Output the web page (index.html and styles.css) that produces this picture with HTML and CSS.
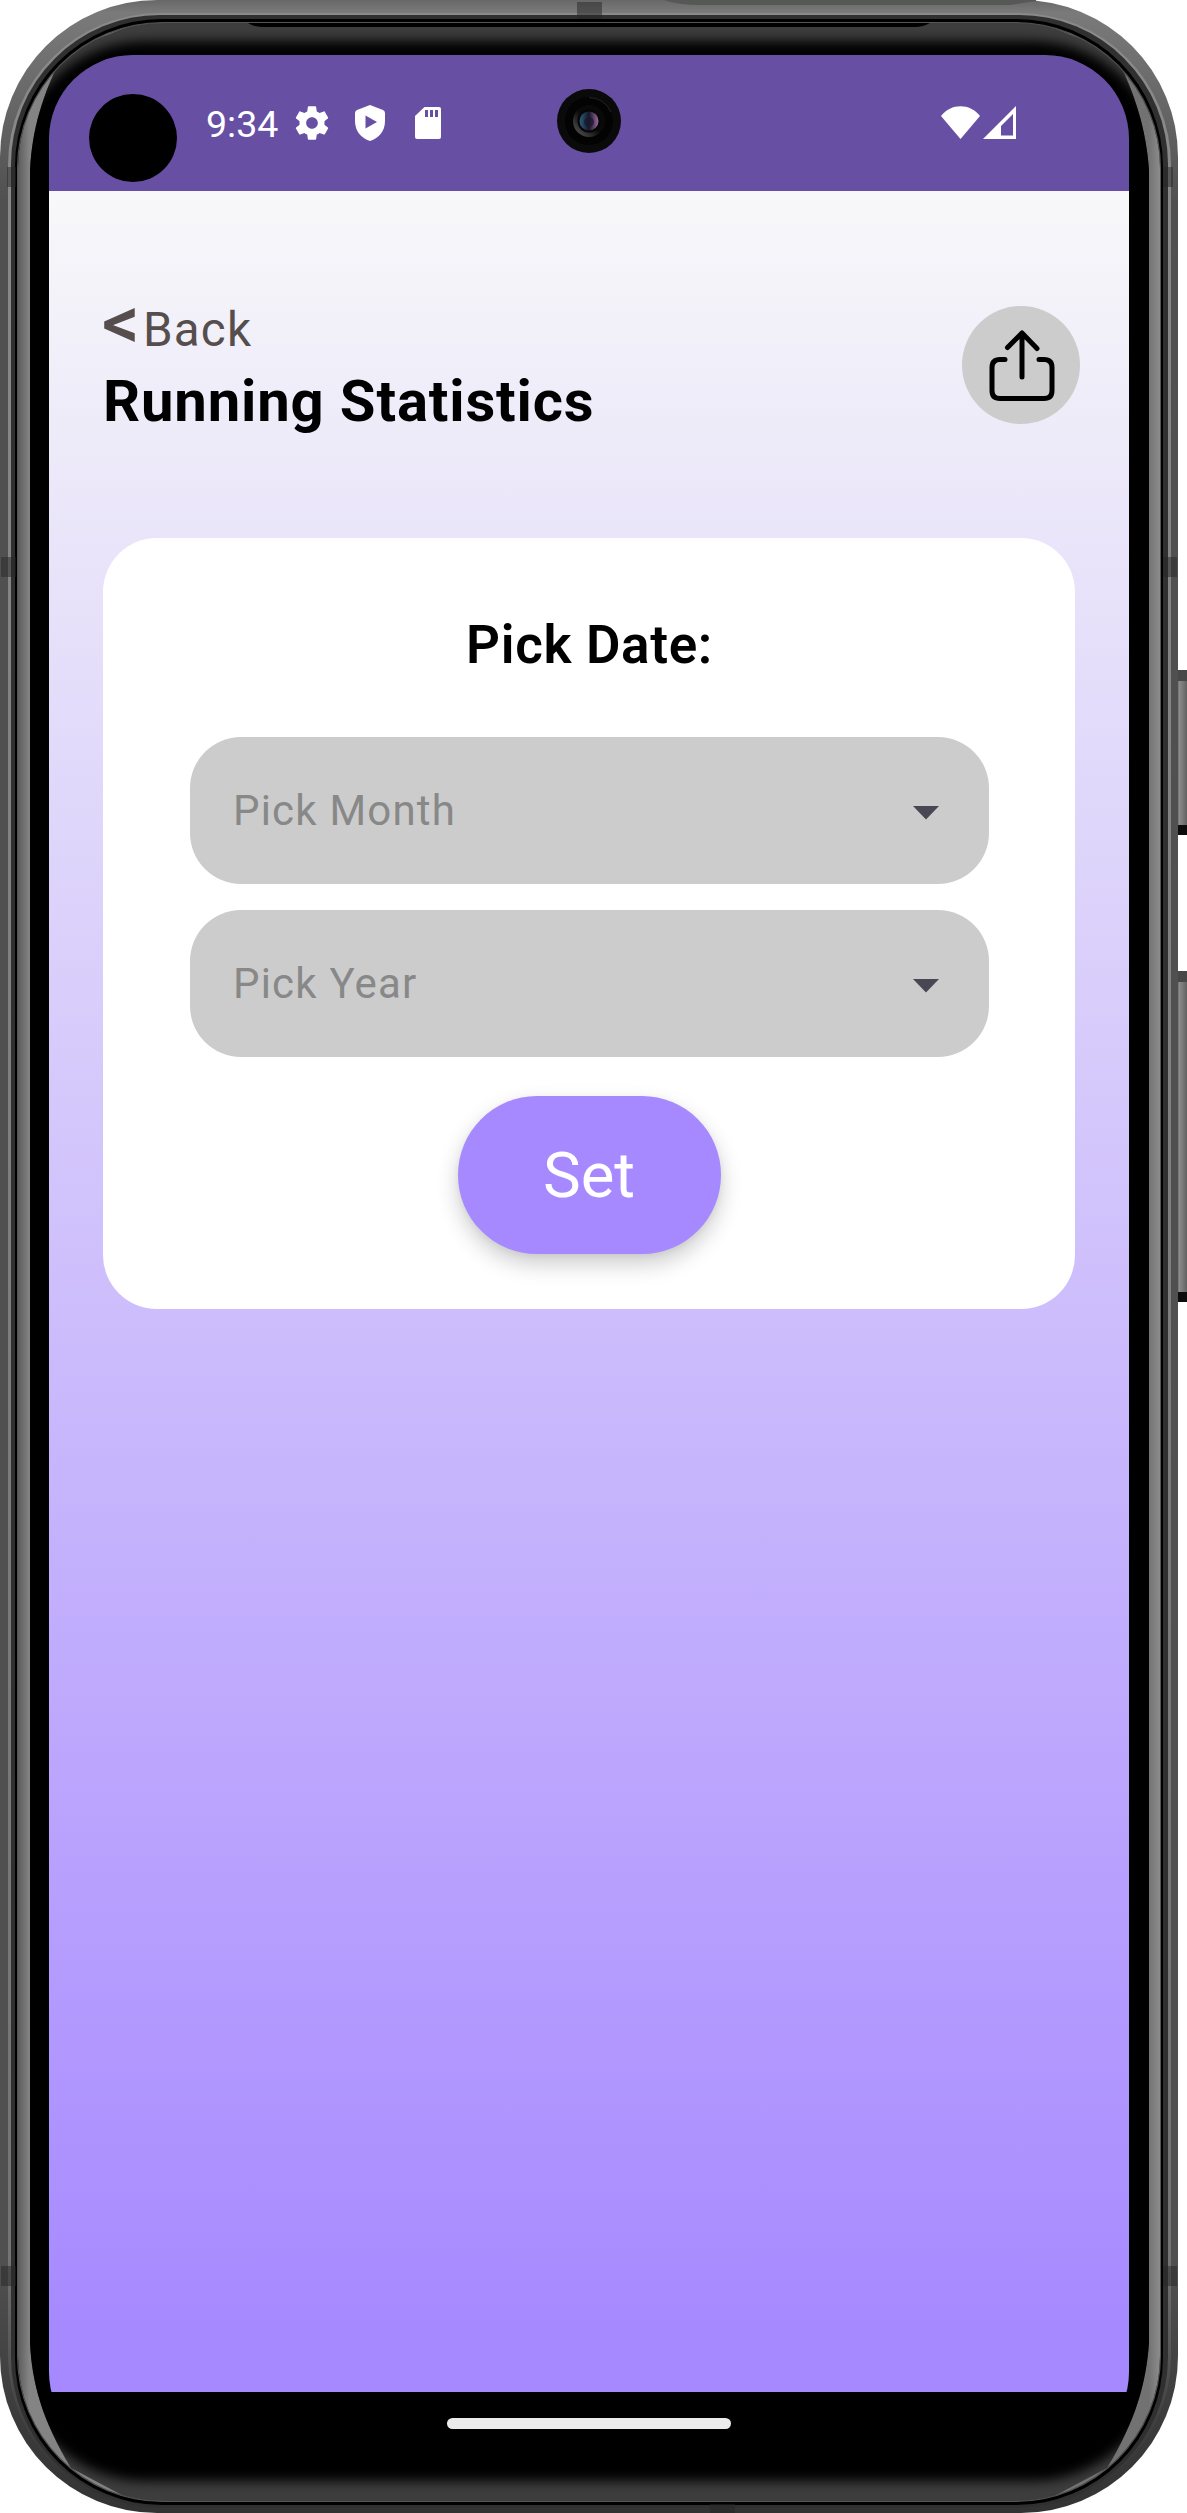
FILE: index.html
```html
<!DOCTYPE html>
<html lang="en">
<head>
<meta charset="utf-8">
<title>Running Statistics</title>
<link rel="stylesheet" href="styles.css">
</head>
<body>
<div class="phone">
  <svg class="frame" viewBox="0 0 1187 2513" aria-hidden="true">
    <defs>
      <linearGradient id="metal" x1="0" y1="0" x2="0" y2="1">
        <stop offset="0" stop-color="#686868"/><stop offset=".005" stop-color="#7a7a7a"/><stop offset=".05" stop-color="#626262"/><stop offset=".08" stop-color="#505050"/><stop offset=".9" stop-color="#505050"/><stop offset=".96" stop-color="#3c3c3c"/><stop offset="1" stop-color="#333"/>
      </linearGradient>
      <linearGradient id="shine" x1="0" y1="0" x2="0" y2="1">
        <stop offset="0" stop-color="#8a8a8a"/><stop offset=".9" stop-color="#747474"/><stop offset=".96" stop-color="#444"/><stop offset="1" stop-color="#303030"/>
      </linearGradient>
      <linearGradient id="key" x1="0" y1="0" x2="1" y2="0">
        <stop offset="0" stop-color="#444"/><stop offset=".3" stop-color="#8b8b8b"/><stop offset="1" stop-color="#626262"/>
      </linearGradient>
      <linearGradient id="bevel" x1="18" y1="0" x2="1160" y2="0" gradientUnits="userSpaceOnUse">
        <stop offset="0" stop-color="#5c5c5c"/><stop offset=".01" stop-color="#848484"/><stop offset=".5" stop-color="#777"/><stop offset=".99" stop-color="#727272"/><stop offset="1" stop-color="#8c8c8c"/>
      </linearGradient>
      <filter id="soft"><feGaussianBlur stdDeviation="6"/></filter>
      <clipPath id="glass"><rect x="18" y="23" width="1142" height="2478" rx="145"/></clipPath>
      <clipPath id="inner"><path d="M30 170C32 130 42 95 64 52L150 18H1028L1114 52C1136 95 1146 130 1149 170V2343C1146 2383 1136 2420 1107 2468L1028 2510H150L71 2468C42 2420 32 2383 30 2343Z"/></clipPath>
    </defs>
    <path d="M1176 670h11v165h-11zM1176 971h11v331h-11z" fill="url(#key)"/>
    <path d="M1176 670h11v11h-11zM1176 971h11v11h-11z" fill="#484848"/>
    <path d="M1176 825h11v10h-11zM1176 1292h11v10h-11z" fill="#0c0c0c"/>
    <rect width="1178" height="2513" rx="157" fill="url(#metal)"/>
    <path d="M664 0Q678 5 700 5H1010L1036 1V0z" fill="#555855"/>
    <rect x="8" y="13" width="1163" height="2495" rx="152" fill="url(#shine)"/>
    <rect x="11" y="15" width="1157" height="2491" rx="149" fill="#303030"/>
    <rect x="15" y="19" width="1148" height="2486" rx="147" fill="#000"/>
    <rect x="17" y="22" width="1144" height="2480" rx="146" fill="#555"/>
    <rect x="18" y="23" width="1142" height="2478" rx="145" fill="#000"/>
    <g clip-path="url(#glass)">
      <rect x="18" y="23" width="1142" height="2480" fill="url(#bevel)"/>
      <g clip-path="url(#inner)">
        <rect x="18" y="18" width="1142" height="2490" fill="#3d3d3d"/>
        <rect x="14" y="41" width="1150" height="2440" rx="132" fill="#020202" filter="url(#soft)"/>
      </g>
      <path d="M248 23Q254 27 262 27H915Q923 27 930 23z" fill="#000"/>
    </g>
    <path d="M577 2h25v17h-25zM7 167h9v20H7zM1163 167h10v20h-10zM1163 557h14v20h-14zM1 557h15v20H1zM1 2266h15v20H1zM1163 2266h14v20h-14zM710 2504h25v9h-25z" fill="#262626" fill-opacity=".5"/>
  </svg>

  <div class="screen">
    <header class="status">
      <i class="cutout"></i>
      <span class="clock">9:34</span>
      <svg class="gear" width="40" height="40" viewBox="0 0 24 24" fill="#fff"><path d="M19.43 12.98c.04-.32.07-.64.07-.98s-.03-.66-.07-.98l2.11-1.65c.19-.15.24-.42.12-.64l-2-3.46c-.12-.22-.39-.3-.61-.22l-2.49 1c-.52-.4-1.08-.73-1.69-.98l-.38-2.65C14.46 2.18 14.25 2 14 2h-4c-.25 0-.46.18-.49.42l-.38 2.65c-.61.25-1.17.59-1.69.98l-2.49-1c-.23-.09-.49 0-.61.22l-2 3.46c-.13.22-.07.49.12.64l2.11 1.65c-.04.32-.07.65-.07.98s.03.66.07.98l-2.11 1.65c-.19.15-.24.42-.12.64l2 3.46c.12.22.39.3.61.22l2.49-1c.52.4 1.08.73 1.69.98l.38 2.65c.03.24.24.42.49.42h4c.25 0 .46-.18.49-.42l.38-2.65c.61-.25 1.17-.59 1.69-.98l2.49 1c.23.09.49 0 .61-.22l2-3.46c.12-.22.07-.49-.12-.64l-2.11-1.65zM12 15.500c-1.930 0-3.500-1.570-3.500-3.500s1.570-3.500 3.500-3.500 3.500 1.570 3.500 3.500-1.570 3.500-3.500 3.500z"/></svg>
      <svg class="shield" width="30" height="36" viewBox="0 0 30 36"><path d="M15 0 28 5Q30 6 30 8V16C30 26 24 33 15 36C6 33 0 26 0 16V8Q0 6 2 5Z" fill="#fff"/><path d="M10.500 10.500v13L22 17z" fill="#6750a4"/></svg>
      <svg class="sd" width="26" height="32" viewBox="0 0 26 32"><path d="M9.500 0H24q2 0 2 2V30q0 2-2 2H2q-2 0-2-2V9z" fill="#fff"/><path d="M10 3h3v7h-3zM15 3h3v7h-3zM20 3h3v7h-3z" fill="#6750a4"/></svg>
      <svg class="camera" width="64" height="66" viewBox="0 0 64 66">
        <defs><linearGradient id="lens"><stop offset="0" stop-color="#286078"/><stop offset=".5" stop-color="#17152a"/><stop offset="1" stop-color="#9d6aa0"/></linearGradient>
        <linearGradient id="ring" x1="0" y1="1" x2="1" y2="0"><stop offset="0" stop-color="#606060"/><stop offset=".5" stop-color="#090909"/></linearGradient></defs>
        <circle cx="32" cy="33" r="32" fill="#0a0a0a"/><circle cx="32" cy="33" r="24" fill="#030303"/><path d="M32 9.500A24 24 0 0 1 54 24" fill="none" stroke="#252525"/><circle cx="32" cy="33" r="16" fill="url(#ring)"/><circle cx="32" cy="33" r="11.500" fill="#050505"/><circle cx="32" cy="33" r="9.500" fill="url(#lens)"/><circle cx="32" cy="34" r="5" fill="#18172c" fill-opacity=".7"/>
      </svg>
      <svg class="wifi" width="39" height="33" viewBox="0 0 39 33"><path d="M0 10C10-3 29-3 39 10L19.500 33z" fill="#fff"/></svg>
      <svg class="cell" width="33" height="33" viewBox="0 0 33 33"><path fill="#fff" fill-rule="evenodd" d="M33 0V33H0zM30 8 18 20V29.500H30z"/></svg>
    </header>

    <main class="app">
      <div class="top">
        <div>
          <div class="back"><span class="lt">&lt;</span><span>Back</span></div>
          <h1>Running Statistics</h1>
        </div>
        <div class="share">
          <svg width="66" height="72" viewBox="0 0 66 72" fill="none" stroke="#000" stroke-width="5" stroke-linecap="round" stroke-linejoin="round"><path d="M33 47V3M18.500 17.500 33 3 48 18.500M16 29.500H11Q3 29.500 3 37.500V60.500Q3 68.500 11 68.500H55Q63 68.500 63 60.500V37.500Q63 29.500 55 29.500H50"/></svg>
        </div>
      </div>
      <section class="card">
        <h2>Pick Date:</h2>
        <div class="field"><span>Pick Month</span><svg width="26" height="14" viewBox="0 0 26 14"><path d="M0 0H26L13 13.500z" fill="#494753"/></svg></div>
        <div class="field"><span>Pick Year</span><svg width="26" height="14" viewBox="0 0 26 14"><path d="M0 0H26L13 13.500z" fill="#494753"/></svg></div>
        <button class="set">Set</button>
      </section>
    </main>
    <footer class="nav"><i class="pill"></i></footer>
  </div>
</div>
</body>
</html>
```
FILE: styles.css
```css
* { box-sizing: border-box; }
body { margin: 0; background: #fff; font-family: Roboto, "Liberation Sans", sans-serif; }
.phone { position: relative; width: 1187px; height: 2513px; padding: 55px 58px 57px 49px; overflow: hidden; }
.frame { position: absolute; inset: 0; width: 1187px; height: 2513px; }
.screen { position: relative; height: 2401px; border-radius: 84px; overflow: hidden; display: flex; flex-direction: column; background: #000; }
.status { height: 136px; flex: none; background: #6750a4; display: flex; align-items: flex-start; padding-left: 40px; }
.status svg { flex: none; }
.cutout { width: 88px; height: 88px; margin-top: 39px; border-radius: 50%; background: #000; flex: none; }
.clock { width: 71px; margin: 46px 0 0 29px; font-size: 37.500px; line-height: 46px; color: #fff; white-space: nowrap; }
.gear { margin: 48px 0 0 15px; }
.shield { margin: 50px 0 0 23px; }
.sd { margin: 52px 0 0 30px; }
.camera { margin: 33px 0 0 116px; }
.wifi { margin: 51px 0 0 320px; }
.cell { margin: 51px 0 0 3px; }
.app { height: 2201px; flex: none; padding: 115px 49px 0 54px; background: linear-gradient(#f8f8fa 0%, #f3f2f9 5%, #e6e0fa 20%, #a688ff 98%); }
.top { display: flex; justify-content: space-between; height: 232px; }
.back { display: flex; height: 52px; color: #564d4d; font-size: 47.500px; line-height: 49px; letter-spacing: 1.2px; }
.lt { width: 41px; margin-left: -1px; font-size: 74px; line-height: 34px; font-weight: 500; letter-spacing: 0; }
h1 { margin: 14px 0 0; font-size: 58px; line-height: 58px; font-weight: 700; letter-spacing: .85px; color: #000; }
.share { width: 118px; height: 118px; border-radius: 50%; background: #ccc; display: flex; justify-content: center; padding: 24px 0 0 1px; }
.card { width: 972px; height: 771px; border-radius: 54px; background: #fff; display: flex; flex-direction: column; align-items: center; padding-top: 77px; }
h2 { margin: 0 0 62px; padding-left: 1px; font-size: 53px; line-height: 60px; font-weight: 600; letter-spacing: .65px; color: #000; }
.field { width: 799px; height: 147px; flex: none; margin: 0 0 26px 1px; border-radius: 51px; background: #ccc; display: flex; align-items: center; justify-content: space-between; padding: 0 50px 0 43px; color: #888; font-size: 42px; letter-spacing: 1.2px; }
.field svg { margin-top: 5px; }
.set { width: 263px; height: 158px; margin-top: 13px; padding: 2px 0 0; border: 0; border-radius: 80px; background: #a688ff; color: #fff; font: 63.500px/156px Roboto, "Liberation Sans", sans-serif; box-shadow: 0 10px 22px rgba(0,0,0,.20), 0 2px 6px rgba(0,0,0,.05); }
.nav { flex: 1; display: flex; justify-content: center; padding-top: 26px; background: #000; }
.pill { width: 284px; height: 11px; border-radius: 6px; background: #ebebeb; }
```
